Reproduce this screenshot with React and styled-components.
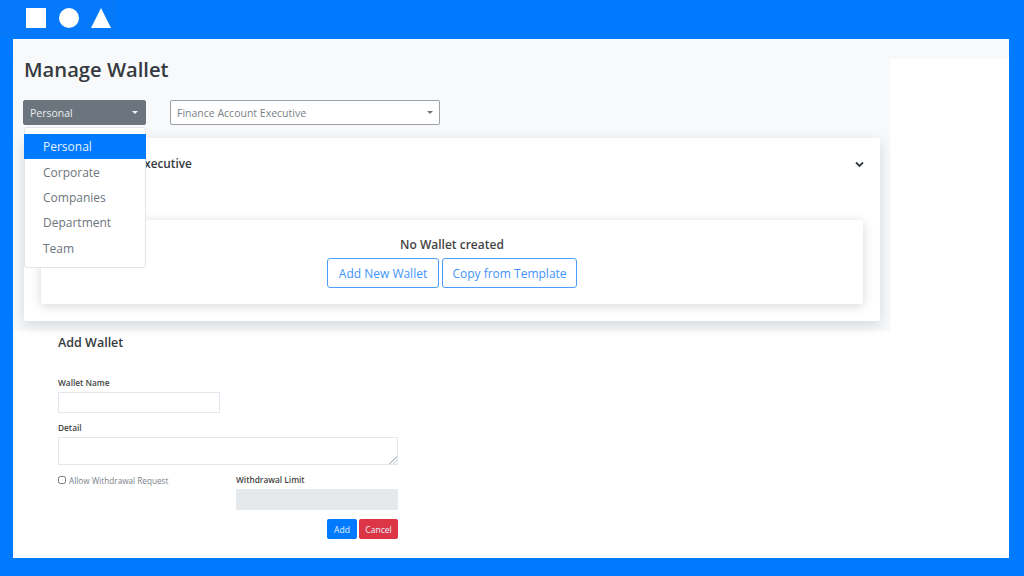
import styled, { createGlobalStyle } from 'styled-components'

const GlobalStyle = createGlobalStyle`
  html, body { margin: 0; padding: 0; }
  body {
    font-family: "Open Sans", "Noto Sans", "Liberation Sans", sans-serif;
    color: #343a40;
    background: #007bff;
  }
  * { box-sizing: border-box; }
`

const Page = styled.div`
  width: 1024px;
  height: 576px;
  background: #007bff;
  overflow: hidden;
`
const TopBar = styled.div`
  height: 39px;
  display: flex;
`
const LogoBox = styled.div`
  width: 118px;
  height: 38px;
  padding: 8px 0 0 26px;
  background: #0479fa;
  display: flex;
  align-items: flex-start;
`
const Frame = styled.div`
  position: relative;
  margin-left: 13px;
  width: 996px;
  height: 519px;
  background: #fff;
`
const Strip = styled.div`
  height: 20px;
  background: #f8f9fa;
`
const Panel = styled.div`
  margin-left: 1px;
  width: 876px;
  height: 272px;
  padding: 0 10px;
  background: #f8f9fa;
`
const Title = styled.h1`
  margin: 0;
  height: 41px;
  font-size: 20.2px;
  line-height: 20px;
  font-weight: 600;
  color: #343a40;
`
const SelectRow = styled.div`
  margin-left: -1px;
  display: flex;
  gap: 24px;
`
const Select = styled.div`
  width: ${(p) => p.$width}px;
  height: 25px;
  padding: 0 ${(p) => (p.$dark ? 7 : 6)}px 0 6px;
  display: flex;
  align-items: center;
  justify-content: space-between;
  font-size: 10.5px;
  border-radius: 2px;
  color: ${(p) => (p.$dark ? '#e9ecef' : '#7a8289')};
  background: ${(p) => (p.$dark ? '#6c757d' : '#fff')};
  border: 1px solid ${(p) => (p.$dark ? '#6c757d' : '#9ba1a7')};
`
const Caret = styled.span`
  width: 0;
  height: 0;
  border-left: 3px solid transparent;
  border-right: 3px solid transparent;
  border-top: 3px solid ${(p) => (p.$dark ? '#f1f3f5' : '#6c757d')};
`
const Card = styled.div`
  margin-top: 13px;
  width: 856px;
  height: 183px;
  padding: 0 17px;
  background: #fff;
  border-radius: 2px;
  box-shadow: 0 4px 14px rgba(0, 0, 0, 0.14);
`
const CardHeader = styled.div`
  height: 82px;
  padding: 17px 0 0;
  display: flex;
  justify-content: space-between;
  align-items: flex-start;
  font-size: 11.8px;
  line-height: 16px;
  font-weight: 600;
  color: #343a40;
`
const Chevron = styled.svg`
  margin: 6px -1px 0 0;
  width: 9px;
  height: 7px;
`
const InnerCard = styled.div`
  height: 84px;
  padding-top: 16px;
  display: flex;
  flex-direction: column;
  align-items: center;
  background: #fff;
  border-radius: 2px;
  box-shadow: 0 2px 12px rgba(0, 0, 0, 0.16);
`
const EmptyText = styled.div`
  width: 100%;
  text-align: center;
  font-size: 12px;
  line-height: 17px;
  font-weight: 600;
  color: #444;
`
const ButtonRow = styled.div`
  margin-top: 5px;
  display: flex;
  gap: 3px;
`
const OutlineButton = styled.button`
  height: 30px;
  width: ${(p) => p.$width}px;
  padding: 0;
  font: inherit;
  font-size: 12px;
  color: #3f94fb;
  background: #fff;
  border: 1px solid #4d9dfb;
  border-radius: 3px;
`
const Menu = styled.div`
  position: absolute;
  left: 11px;
  top: 88px;
  width: 122px;
  height: 141px;
  padding-top: 6px;
  background: #fff;
  border: 1px solid #e2e4e6;
  border-radius: 3px;
`
const MenuItem = styled.div`
  height: 25.4px;
  margin: 0 -1px;
  padding: 0 0 0 19px;
  display: flex;
  align-items: center;
  font-size: 12px;
  color: ${(p) => (p.$active ? '#e4f0ff' : '#6c757d')};
  background: ${(p) => (p.$active ? '#007bff' : 'transparent')};
`
const Form = styled.form`
  width: 385px;
  margin-left: 45px;
  padding-top: 3px;
`
const FormTitle = styled.h2`
  margin: 0 0 25px;
  font-size: 12.5px;
  line-height: 18px;
  font-weight: 600;
  color: #343a40;
`
const Label = styled.label`
  display: block;
  margin-bottom: 3px;
  font-size: 8.3px;
  line-height: 12px;
  font-weight: 600;
  color: #444;
`
const NameInput = styled.input`
  display: block;
  width: 162px;
  height: 21px;
  margin-bottom: 9px;
  border: 1px solid #e3e7ef;
  background: #fff;
  outline: none;
`
const DetailInput = styled.textarea`
  display: block;
  width: 340px;
  height: 28px;
  margin: 0 0 9px;
  border: 1px solid #e3e7ef;
  background: #fff;
  outline: none;
  resize: vertical;

  &::-webkit-resizer {
    background: linear-gradient(135deg, transparent 72%, #c4c7ca 72%, #c4c7ca 77%, transparent 77%, transparent 84%, #c4c7ca 84%, #c4c7ca 89%, transparent 89%);
  }
`
const SplitRow = styled.div`
  width: 340px;
  display: flex;
  justify-content: space-between;
`
const CheckLabel = styled.label`
  display: flex;
  align-items: center;
  gap: 3px;
  height: 12px;
  font-size: 8.2px;
  color: #7a8289;
`
const CheckBox = styled.input`
  margin: 0;
  width: 8px;
  height: 8px;
`
const LimitField = styled.div`
  width: 162px;
`
const LimitInput = styled.input`
  display: block;
  width: 100%;
  height: 21px;
  border: 0;
  background: #e6e9ec;
`
const Actions = styled.div`
  width: 340px;
  margin-top: 9px;
  display: flex;
  justify-content: flex-end;
  gap: 2px;
`
const ActionButton = styled.button`
  height: 20px;
  width: ${(p) => p.$width}px;
  padding: 0;
  font: inherit;
  font-size: 8.5px;
  color: #e8f1ff;
  background: ${(p) => p.$bg};
  border: 0;
  border-radius: 2px;
`

function App() {
  return (
    <Page>
      <GlobalStyle />
      <TopBar>
        <LogoBox>
          <svg width="85" height="20" viewBox="0 0 85 20">
            <rect x="0" y="0" width="20" height="20" fill="#fff" />
            <circle cx="43" cy="10" r="10" fill="#fff" />
            <polygon points="65,20 85,20 75,0" fill="#fff" />
          </svg>
        </LogoBox>
      </TopBar>
      <Frame>
        <Strip />
        <Panel>
          <Title>Manage Wallet</Title>
          <SelectRow>
            <Select $dark $width={123}>
              Personal
              <Caret $dark />
            </Select>
            <Select $width={270}>
              Finance Account Executive
              <Caret />
            </Select>
          </SelectRow>
          <Card>
            <CardHeader>
              Finance Account Executive
              <Chevron viewBox="0 0 9 7">
                <path d="M1 1.5 L4.5 5 L8 1.5" fill="none" stroke="#343a40" strokeWidth="1.8" />
              </Chevron>
            </CardHeader>
            <InnerCard>
              <EmptyText>No Wallet created</EmptyText>
              <ButtonRow>
                <OutlineButton type="button" $width={112}>Add New Wallet</OutlineButton>
                <OutlineButton type="button" $width={135}>Copy from Template</OutlineButton>
              </ButtonRow>
            </InnerCard>
          </Card>
        </Panel>
        <Menu>
          <MenuItem $active>Personal</MenuItem>
          <MenuItem>Corporate</MenuItem>
          <MenuItem>Companies</MenuItem>
          <MenuItem>Department</MenuItem>
          <MenuItem>Team</MenuItem>
        </Menu>
        <Form>
          <FormTitle>Add Wallet</FormTitle>
          <Label>Wallet Name</Label>
          <NameInput />
          <Label>Detail</Label>
          <DetailInput />
          <SplitRow>
            <CheckLabel>
              <CheckBox type="checkbox" />
              Allow Withdrawal Request
            </CheckLabel>
            <LimitField>
              <Label>Withdrawal Limit</Label>
              <LimitInput disabled />
            </LimitField>
          </SplitRow>
          <Actions>
            <ActionButton type="button" $width={30} $bg="#007bff">Add</ActionButton>
            <ActionButton type="button" $width={39} $bg="#dc3545">Cancel</ActionButton>
          </Actions>
        </Form>
      </Frame>
    </Page>
  )
}

export default App
